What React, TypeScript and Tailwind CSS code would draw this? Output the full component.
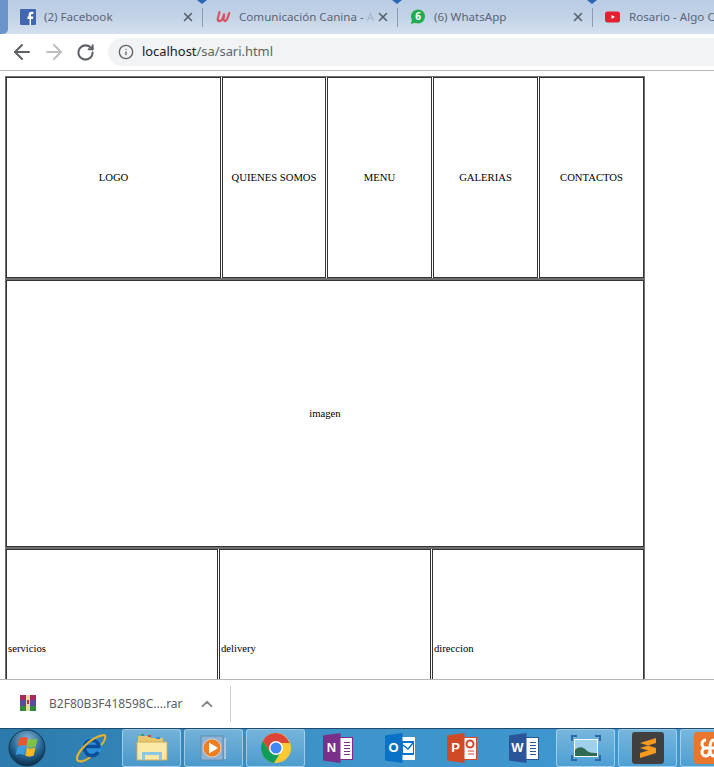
import React from "react";
import { ArrowLeft, ArrowRight, RotateCw, Info, X, ChevronUp } from "lucide-react";

const uiFont = "font-['Noto_Sans','Open_Sans',sans-serif]";

function FacebookIcon() {
  return (
    <svg width="16" height="16" viewBox="0 0 16 16">
      <rect width="16" height="16" rx="1" fill="#4267b2" />
      <path d="M11 16V10h2l.3-2.4H11V6.200c0-.7.2-1.200 1.200-1.200h1.200V2.900c-.3 0-1-.1-1.800-.1-1.800 0-3 1.100-3 3.100v1.700H7.500V10h2.100v6z" fill="#fff" />
    </svg>
  );
}

function UdemyIcon() {
  return (
    <svg width="16" height="16" viewBox="0 0 16 16" fill="none">
      <path d="M4.500 3 2.800 9.500c-.4 2 .7 3 2.200 2.500s3.200-3 4-6.500" stroke="#d8525f" strokeWidth="2.200" strokeLinecap="round" />
      <path d="M9 5.500 8.600 10c0 2 1.400 2.500 2.400 1.500s2.200-3.500 3.200-7.500" stroke="#d8525f" strokeWidth="2.200" strokeLinecap="round" />
    </svg>
  );
}

function WhatsAppIcon() {
  return (
    <svg width="16" height="16" viewBox="0 0 16 16">
      <circle cx="8" cy="7.500" r="7" fill="#1fae4b" />
      <path d="M2 10 1 15l5-1.500z" fill="#1fae4b" />
      <text x="8" y="11" fontSize="10" fontWeight="700" fill="#fff" textAnchor="middle" fontFamily="Noto Sans, sans-serif">6</text>
    </svg>
  );
}

function YoutubeIcon() {
  return (
    <svg width="16" height="16" viewBox="0 0 16 16">
      <rect y="2.500" width="15" height="11" rx="2.500" fill="#e52030" />
      <path d="M6.500 6v4l3.500-2z" fill="#fff" />
    </svg>
  );
}

function Tab({ icon, title, faded, last }: { icon: React.ReactNode; title: string; faded?: string; last?: boolean }) {
  return (
    <div className="relative flex h-full w-[195px] shrink-0 items-center pl-[12px]">
      <span className="flex w-[16px] shrink-0">{icon}</span>
      <span className={`ml-[8px] whitespace-nowrap text-[11.600px] text-[#5a6478] ${last ? "" : "w-[134px]"}`}>
        {title}
        {faded && <span className="text-[#5a6478]/30">{faded}</span>}
      </span>
      {!last && <X size={14} strokeWidth={2.6} className="ml-[3px] shrink-0 text-[#55606e]" />}
      {!last && <span className="absolute right-0 top-[8px] h-[19px] w-px bg-[#8d9cb0]" />}
      {!last && <span className="absolute right-[-4px] top-0 h-0 w-0 border-x-[5px] border-t-[4px] border-x-transparent border-t-[#2a67b5]" />}
    </div>
  );
}

function BrowserChrome() {
  return (
    <div className={uiFont}>
      <div className="flex h-[34px] overflow-hidden bg-gradient-to-b from-[#b9cde5] via-[#c3d3e7] to-[#d4e0ee]">
        <div className="h-full w-[8px] shrink-0 rounded-br-[5px] bg-[#6b94cc]" />
        <Tab icon={<FacebookIcon />} title="(2) Facebook" />
        <Tab icon={<UdemyIcon />} title="Comunicación Canina - " faded="A" />
        <Tab icon={<WhatsAppIcon />} title="(6) WhatsApp" />
        <Tab icon={<YoutubeIcon />} title="Rosario - Algo C" last />
      </div>
      <div className="flex h-[37px] items-center border-b border-[#b5b5b5] bg-white">
        <ArrowLeft size={24} strokeWidth={2} className="ml-[10px] text-[#5f6368]" />
        <ArrowRight size={24} strokeWidth={2} className="ml-[8px] text-[#bcbec0]" />
        <RotateCw size={19} strokeWidth={2.600} className="ml-[10px] text-[#5f6368]" />
        <div className="ml-[13px] flex h-[28px] flex-1 items-center rounded-l-full bg-[#f1f3f4] pl-[10px]">
          <Info size={16} strokeWidth={2} className="text-[#5f6368]" />
          <span className="ml-[8px] text-[12.900px] text-[#202124]">
            localhost<span className="text-[#5f6368]">/sa/sari.html</span>
          </span>
        </div>
      </div>
    </div>
  );
}

function Cell({ label, className }: { label: string; className: string }) {
  return (
    <div className={`flex items-center justify-center border border-[#333] pb-[2px] ${className}`}>
      {label}
    </div>
  );
}

function BottomCell({ label, className }: { label: string; className: string }) {
  return (
    <div className={`flex items-center border border-[#333] pb-[2px] pl-px ${className}`}>
      {label}
    </div>
  );
}

function PageTable() {
  return (
    <div className="h-[608px] overflow-hidden bg-white pl-[5px] pt-[5px] font-['Liberation_Serif',serif] text-[10.670px] text-black">
      <div className="flex w-[640px] flex-col">
        <div className="flex h-[203px] gap-px border border-[#6f6f6f]">
          <Cell label="LOGO" className="w-[215px]" />
          <Cell label="QUIENES SOMOS" className="w-[104px]" />
          <Cell label="MENU" className="w-[105px]" />
          <Cell label="GALERIAS" className="w-[105px]" />
          <Cell label="CONTACTOS" className="flex-1" />
        </div>
        <div className="flex h-[269px] border border-[#6f6f6f]">
          <Cell label="imagen" className="flex-1" />
        </div>
        <div className="flex h-[201px] gap-px border border-[#6f6f6f]">
          <BottomCell label="servicios" className="w-[212px]" />
          <BottomCell label="delivery" className="w-[212px]" />
          <BottomCell label="direccion" className="flex-1" />
        </div>
      </div>
    </div>
  );
}

function DownloadBar() {
  return (
    <div className={`flex h-[49px] items-center border-t border-[#b5b5b5] bg-white ${uiFont}`}>
      <svg width="16" height="16" viewBox="0 0 16 16" className="mb-[3px] ml-[20px] shrink-0">
        <rect width="16" height="5" fill="#a62a5f" />
        <rect y="5" width="16" height="6" fill="#5a4aa0" />
        <rect y="11" width="16" height="5" fill="#2f8a3c" />
        <rect x="6" width="4" height="16" fill="#e8d9a0" />
        <rect x="7" y="5" width="2" height="4" fill="#c63030" />
      </svg>
      <span className="ml-[13px] w-[149px] text-[12px] text-[#5a6068]">B2F80B3F418598C....rar</span>
      <ChevronUp size={18} strokeWidth={2.400} className="text-[#8a8a8a]" />
      <span className="ml-[14px] h-[36px] w-px bg-[#cfcfcf]" />
    </div>
  );
}

function StartOrb() {
  return (
    <svg width="38" height="38" viewBox="0 0 38 38">
      <defs>
        <radialGradient id="orb" cx="50%" cy="30%" r="70%">
          <stop offset="0%" stopColor="#8fc0dc" />
          <stop offset="65%" stopColor="#1f5f8c" />
          <stop offset="100%" stopColor="#0c2c48" />
        </radialGradient>
      </defs>
      <circle cx="19" cy="19" r="18" fill="url(#orb)" stroke="#123a55" />
      <g transform="translate(1.500 -1)">
        <path d="M10 10c3-1.500 6-1.500 8.500 0l-1.800 8c-2-1.500-5-1.500-8.500 0z" fill="#e8562a" />
        <path d="M19.500 10.500c2 1.500 5 1.500 8.500 0l-1.800 8c-3 1.500-6 1.500-8.500 0z" fill="#7fc242" />
        <path d="M8 19c3-1.500 6-1.500 8.500 0l-1.800 8c-2-1.500-5-1.500-8.500 0z" fill="#3d9be0" />
        <path d="M17.500 19.500c2 1.500 5 1.500 8.500 0l-1.800 8c-3 1.500-6 1.500-8.500 0z" fill="#f6b81e" />
      </g>
    </svg>
  );
}

function IEIcon() {
  return (
    <svg width="33" height="33" viewBox="0 0 32 32" fill="none">
      <circle cx="17" cy="15" r="10" fill="#2a8fd8" />
      <path d="M10 14h14c0-4-3-6-7-6s-7 3-7 7 3 8 7 8c3 0 5-1 6.500-3.500" stroke="#0d4f96" strokeWidth="3.500" />
      <path d="M3 27C1 22 15 5 29 3c2 0 2 4-2 9M3 27c2 3 8 1 12-2" stroke="#e8b32a" strokeWidth="2" strokeLinecap="round" />
    </svg>
  );
}

function FolderIcon() {
  return (
    <svg width="32" height="30" viewBox="0 0 32 30">
      <path d="M2 3h11l2 2h12v6H2z" fill="#e8c66a" />
      <rect x="5" y="1" width="3" height="2" fill="#3aa655" />
      <rect x="12" y="2" width="3" height="2" fill="#d0483a" />
      <rect x="20" y="4" width="4" height="2" fill="#3a8fd6" />
      <path d="M1 9h30v18H1z" fill="#fbe9a8" stroke="#d1ad5a" />
      <path d="M6 27v-8h20v8h-3v-5H9v5z" fill="#8ec6e6" />
    </svg>
  );
}

function MediaIcon() {
  return (
    <svg width="30" height="30" viewBox="0 0 30 30">
      <rect x="2" y="3" width="22" height="24" fill="#8fb3d4" stroke="#5d8bb2" />
      <rect x="25" y="5" width="2" height="21" fill="#a9c8e0" />
      <circle cx="13" cy="15" r="9" fill="#f0801f" stroke="#fff" strokeOpacity=".5" />
      <path d="M10 9.500v11l9-5.500z" fill="#fff" />
    </svg>
  );
}

function ChromeIcon() {
  return (
    <svg width="30" height="30" viewBox="0 0 30 30">
      <circle cx="15" cy="15" r="15" fill="#fcc934" />
      <path d="M15 0A15 15 0 0 0 2 7.500L8 18l7-8h13.500A15 15 0 0 0 15 0z" fill="#db4437" />
      <path d="M2 7.500A15 15 0 0 0 13 29.900L19 20l-11-2z" fill="#0f9d58" />
      <circle cx="15" cy="15" r="7" fill="#fff" />
      <circle cx="15" cy="15" r="5.500" fill="#4285f4" />
    </svg>
  );
}

function OfficeIcon({ letter, dark, edge, page }: { letter: string; dark: string; edge: string; page: React.ReactNode }) {
  return (
    <div className="relative h-[30px] w-[30px]">
      <div className={`absolute right-0 top-[4px] h-[23px] w-[18px] overflow-hidden border bg-white ${edge}`}>{page}</div>
      <div
        className={`absolute left-0 top-0 flex h-[30px] w-[18px] items-center justify-center text-[13px] font-bold text-white [clip-path:polygon(0_8%,100%_0,100%_100%,0_92%)] ${dark}`}
      >
        <span className="font-['Liberation_Sans',sans-serif]">{letter}</span>
      </div>
    </div>
  );
}

function RuledPage({ color }: { color: string }) {
  return (
    <svg width="16" height="21" viewBox="0 0 16 21" fill="none" stroke={color} strokeWidth="1">
      <path d="M8 4.500h6M8 7.500h6M8 10.500h6M8 13.500h6M8 16.500h6" />
    </svg>
  );
}

function MailPage() {
  return (
    <svg width="16" height="21" viewBox="0 0 16 21" fill="none">
      <rect y="3" width="16" height="14" fill="#0a72c6" />
      <rect x="5" y="5" width="10" height="10" fill="#fff" />
      <path d="m5 7 5 4 5-6" stroke="#0a72c6" strokeWidth="1.500" />
    </svg>
  );
}

function SlidePage() {
  return (
    <svg width="16" height="21" viewBox="0 0 16 21" fill="none" stroke="#d04a26" strokeWidth="1">
      <circle cx="10" cy="6" r="3.500" strokeWidth="2" />
      <path d="M8 13h6M8 16h6" />
    </svg>
  );
}

function PhotoIcon() {
  return (
    <svg width="30" height="26" viewBox="0 0 30 26" fill="none">
      <path d="M1 6V1h5M24 1h5v5M29 20v5h-5M6 25H1v-5" stroke="#2a6aa8" strokeWidth="2" />
      <rect x="3" y="4" width="24" height="18" fill="#fff" />
      <rect x="4" y="5" width="22" height="16" fill="#9fd0ec" />
      <path d="M4 15c4-4 8-3 11 0s7 3 11 3v3H4z" fill="#2f6a52" />
    </svg>
  );
}

function SublimeIcon() {
  return (
    <div className="flex h-[32px] w-[32px] items-center justify-center rounded-[3px] bg-[#404040]">
      <svg width="18" height="22" viewBox="0 0 18 22">
        <path d="M17 1v5L1 11V6zM1 11l16 5v-5L1 6zM17 16v-5L1 16v5z" fill="#f79a1e" />
      </svg>
    </div>
  );
}

function XamppIcon() {
  return (
    <div className="flex h-[32px] w-[32px] items-center justify-center rounded-[3px] bg-[#e8762c]">
      <svg width="22" height="22" viewBox="0 0 22 22" fill="none" stroke="#fff" strokeWidth="3">
        <path d="M7 3a4 4 0 0 0 0 8h8a4 4 0 0 0 0-8c-2 0-4 2-4 8s2 8 4 8a4 4 0 0 0 0-8H7a4 4 0 0 0 0 8c2 0 4-2 4-8" />
      </svg>
    </div>
  );
}

function TaskSlot({ tile, children }: { tile?: boolean; children: React.ReactNode }) {
  return (
    <div
      className={`flex h-[38px] w-[59px] shrink-0 items-center justify-center ${
        tile ? "rounded-[3px] border border-[#bcdcf0]/70 bg-gradient-to-b from-[#8fc4e4]/70 to-[#58a6d6]/60" : ""
      }`}
    >
      {children}
    </div>
  );
}

function Taskbar() {
  return (
    <div className="flex h-[39px] items-center overflow-hidden border-t border-[#1e4a6c] bg-gradient-to-r from-[#2c7aab] via-[#3f95cb] to-[#3c97d0]">
      <div className="flex w-[54px] shrink-0 justify-center">
        <StartOrb />
      </div>
      <div className="flex w-[68px] shrink-0 justify-center pl-[4px]">
        <IEIcon />
      </div>
      <div className="flex gap-[3px]">
        <TaskSlot tile><FolderIcon /></TaskSlot>
        <TaskSlot tile><MediaIcon /></TaskSlot>
        <TaskSlot tile><ChromeIcon /></TaskSlot>
        <TaskSlot>
          <OfficeIcon letter="N" dark="bg-[#7a2f8a]" edge="border-[#7a2f8a]" page={<RuledPage color="#7a2f8a" />} />
        </TaskSlot>
        <TaskSlot>
          <OfficeIcon letter="O" dark="bg-[#0a72c6]" edge="border-transparent" page={<MailPage />} />
        </TaskSlot>
        <TaskSlot>
          <OfficeIcon letter="P" dark="bg-[#d04a26]" edge="border-[#d04a26]" page={<SlidePage />} />
        </TaskSlot>
        <TaskSlot>
          <OfficeIcon letter="W" dark="bg-[#2a5699]" edge="border-[#2a5699]" page={<RuledPage color="#2a5699" />} />
        </TaskSlot>
        <TaskSlot tile><PhotoIcon /></TaskSlot>
        <TaskSlot tile><SublimeIcon /></TaskSlot>
        <TaskSlot tile><XamppIcon /></TaskSlot>
      </div>
    </div>
  );
}

export default function App() {
  return (
    <div className="h-[767px] w-[714px] overflow-hidden bg-white">
      <BrowserChrome />
      <PageTable />
      <DownloadBar />
      <Taskbar />
    </div>
  );
}
